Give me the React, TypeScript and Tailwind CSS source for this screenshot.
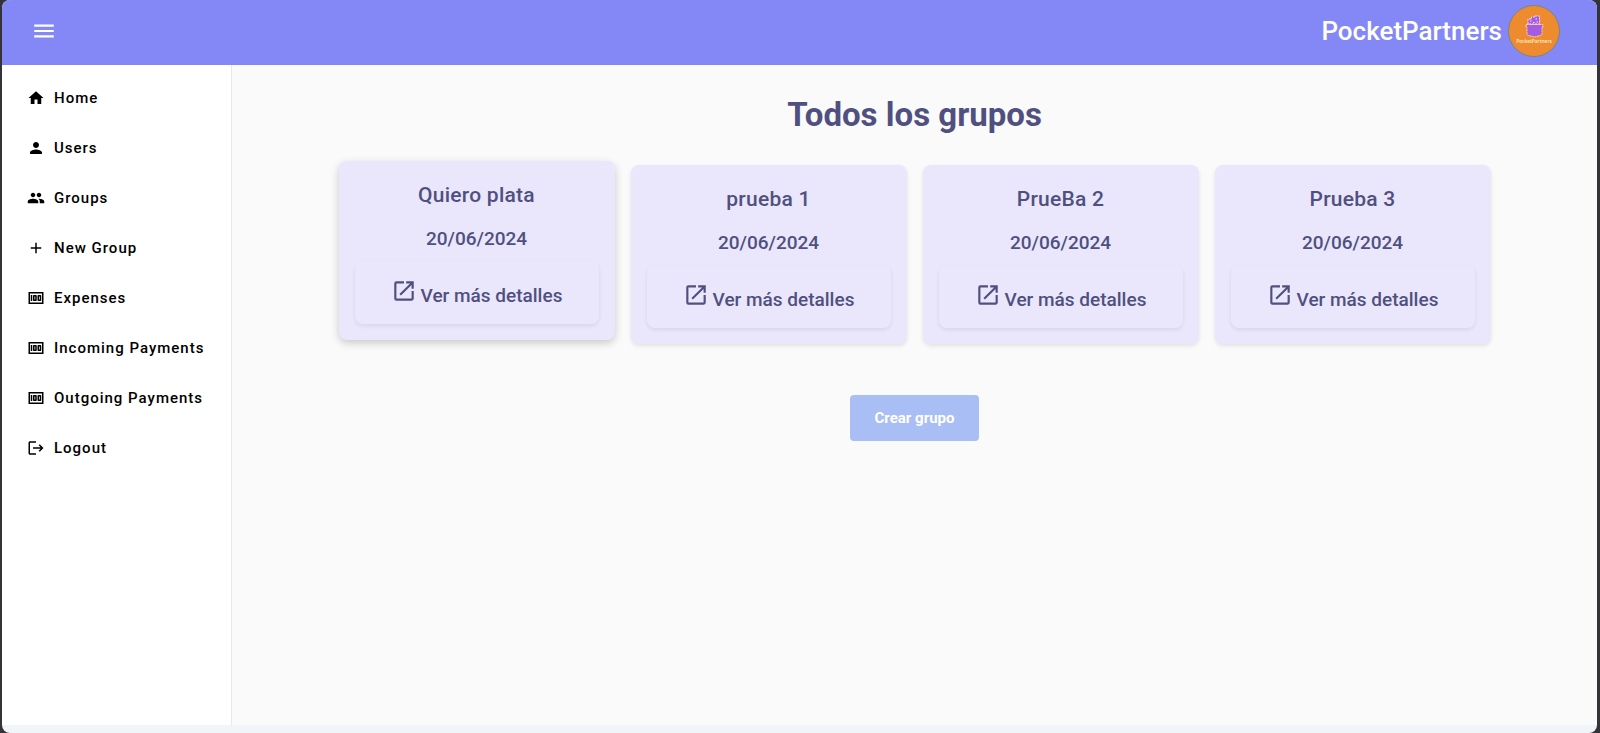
import React from 'react';
import {
  MdAdd,
  MdGroup,
  MdHome,
  MdLogout,
  MdMenu,
  MdMoney,
  MdOpenInNew,
  MdPerson,
} from 'react-icons/md';
import type { IconType } from 'react-icons';

const navItems: { label: string; icon: IconType }[] = [
  { label: 'Home', icon: MdHome },
  { label: 'Users', icon: MdPerson },
  { label: 'Groups', icon: MdGroup },
  { label: 'New Group', icon: MdAdd },
  { label: 'Expenses', icon: MdMoney },
  { label: 'Incoming Payments', icon: MdMoney },
  { label: 'Outgoing Payments', icon: MdMoney },
  { label: 'Logout', icon: MdLogout },
];

const groups = [
  { name: 'Quiero plata', date: '20/06/2024', raised: true },
  { name: 'prueba 1', date: '20/06/2024', raised: false },
  { name: 'PrueBa 2', date: '20/06/2024', raised: false },
  { name: 'Prueba 3', date: '20/06/2024', raised: false },
];

function Logo() {
  return (
    <svg viewBox="0 0 52 52" className="size-13" role="img" aria-label="PocketPartners logo">
      <circle cx="26" cy="26" r="25.5" fill="#ee8b2f" stroke="#7f8577" strokeWidth="1" />
      <path d="M20 19v-5h3.500v-2h3V11h5v8z" fill="#a45de0" stroke="#f7dff0" strokeWidth="1" strokeDasharray="2 1" />
      <path d="M22 16h1.500m1.500 1.500h1.500m1-3.500h1.500m-.5 3h1.500" stroke="#f7dff0" strokeWidth="1" />
      <path d="M19 20h15v8q0 1.500-1.500 2l-6 1.500-6-1.500q-1.500-.5-1.500-2z" fill="#a45de0" />
      <path d="M18 19.500h17v2.500h-1v6.500q0 1.500-1.500 2l-6 1.500-6-1.500q-1.500-.5-1.500-2V22h-1z" fill="none" stroke="#f7dcc8" strokeWidth=".8" strokeDasharray="2 .6" />
      <text x="26" y="37.500" textAnchor="middle" fontFamily="Open Sans, sans-serif" fontSize="4.800" fontWeight="600" fill="#fff0c8">
        PocketPartners
      </text>
    </svg>
  );
}

function GroupCard({ name, date, raised }: { name: string; date: string; raised: boolean }) {
  return (
    <article
      className={
        raised
          ? '-translate-y-1 rounded-lg bg-[#eae7fc] p-4 text-center shadow-[0_3px_8px_rgba(0,0,0,0.2)]'
          : 'rounded-lg bg-[#eae7fc] p-4 text-center shadow-[0_2px_4px_rgba(0,0,0,0.1)]'
      }
    >
      <h2 className="text-[21px] leading-9 font-medium tracking-[0.25px]">{name}</h2>
      <p className="mt-2 text-[19px] leading-9 font-medium">{date}</p>
      <button
        type="button"
        className="mt-1 flex h-[63px] w-full items-center justify-center gap-1 rounded-lg text-[19px] font-medium shadow-[0_2px_4px_rgba(0,0,0,0.08)]"
      >
        <MdOpenInNew className="mb-1 size-[26px]" aria-hidden="true" />
        <span className="mt-2">Ver más detalles</span>
      </button>
    </article>
  );
}

export default function App() {
  return (
    <div className="min-h-screen bg-[#343438] pr-[3px] pl-0.5 font-[Roboto,sans-serif]">
      <div className="flex min-h-screen flex-col overflow-hidden rounded-lg bg-[#f1f5f9] pb-2">
        <header className="flex h-[65px] items-center justify-between bg-[#8388f6] pr-[37px] pb-[3px] pl-[29px] text-white">
          <button type="button" aria-label="Menu">
            <MdMenu className="size-[26px]" aria-hidden="true" />
          </button>
          <div className="flex items-center gap-1.5">
            <span className="text-[26px] font-medium">PocketPartners</span>
            <Logo />
          </div>
        </header>
        <div className="flex grow">
          <nav className="w-[230px] shrink-0 border-r border-[#e8e8e8] bg-white px-[25px] py-2">
            <ul>
              {navItems.map(({ label, icon: Icon }) => (
                <li key={label}>
                  <a href="#" className="flex h-[50px] items-center gap-[9px] text-[15px] font-medium tracking-[1px] whitespace-nowrap text-black">
                    <Icon className="size-[18px] shrink-0" aria-hidden="true" />
                    {label}
                  </a>
                </li>
              ))}
            </ul>
          </nav>
          <main className="grow bg-[#fafafa] px-6 pt-7 text-[#505080]">
            <h1 className="text-center text-[33px] leading-11 font-bold">Todos los grupos</h1>
            <section className="mx-auto mt-7 grid max-w-6xl grid-cols-4 gap-4">
              {groups.map((group) => (
                <GroupCard key={group.name} {...group} />
              ))}
            </section>
            <div className="mt-[51px] flex justify-center">
              <button type="button" className="h-[46px] rounded bg-[#a9bef5] px-[25px] text-[15px] font-bold text-white">
                Crear grupo
              </button>
            </div>
          </main>
        </div>
      </div>
    </div>
  );
}
